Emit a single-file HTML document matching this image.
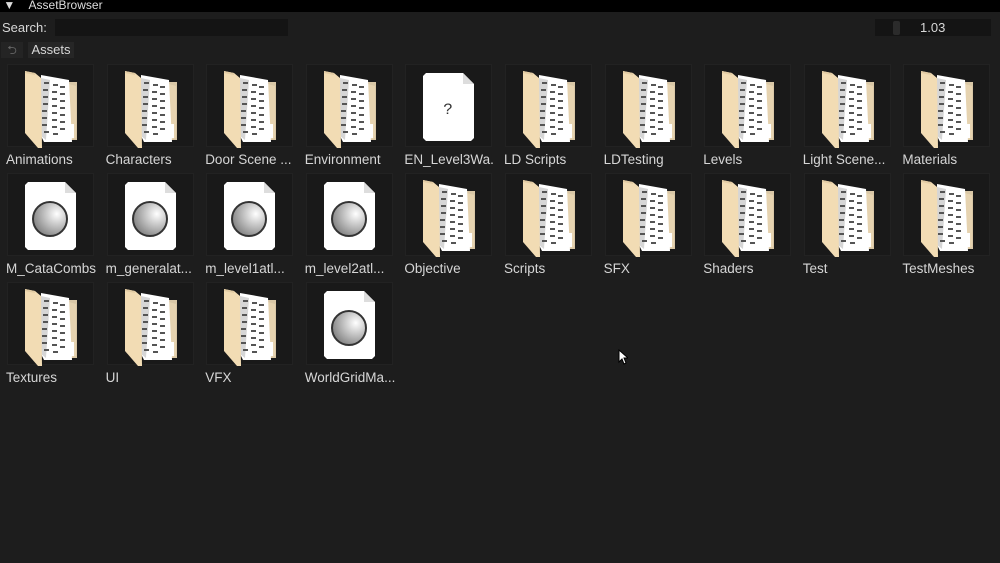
<!DOCTYPE html>
<html><head><meta charset="utf-8"><style>
body{margin:0;width:1000px;height:563px;background:#1d1d1d;font-family:"Liberation Sans",sans-serif;overflow:hidden;position:relative;color:#d8d8d8}
.title{position:absolute;left:0;top:0;width:1000px;height:12px;background:#000;font-size:12px;line-height:11px;color:#ddd}
.tile{position:absolute;width:87px;height:83px;background:#191919;border:1px solid #222;box-sizing:border-box}
.lbl{position:absolute;font-size:13.5px;color:#d6d6d6;white-space:nowrap}
.ic{position:absolute}
</style></head><body>
<svg width="0" height="0" style="position:absolute">
<defs>
<g id="fold">
<polygon points="45,12 53,12 53,70 45,70" fill="#d9c7a6"/>
<polygon points="45,14 52,16 52,68 45,70" fill="#e6d3b0"/>
<polygon points="17,5 45,10 48,72 20,72 17,66" fill="#fff"/>
<polygon points="17,8 26,10 22,70 17,66" fill="#d6d6d6"/>
<g fill="#555">
<rect x="20" y="12" width="5" height="2"/><rect x="29" y="14" width="5" height="2"/><rect x="36" y="16" width="5" height="2"/>
<rect x="19" y="19" width="5" height="2"/><rect x="28" y="21" width="5" height="2"/><rect x="36" y="23" width="5" height="2"/>
<rect x="19" y="26" width="5" height="2"/><rect x="28" y="28" width="5" height="2"/><rect x="36" y="30" width="5" height="2"/>
<rect x="19" y="33" width="5" height="2"/><rect x="28" y="35" width="5" height="2"/><rect x="36" y="37" width="5" height="2"/>
<rect x="18" y="40" width="5" height="2"/><rect x="28" y="42" width="5" height="2"/><rect x="36" y="44" width="5" height="2"/>
<rect x="18" y="47" width="5" height="2"/><rect x="28" y="49" width="5" height="2"/><rect x="36" y="51" width="5" height="2"/>
<rect x="18" y="54" width="5" height="2"/><rect x="28" y="56" width="5" height="2"/><rect x="36" y="58" width="5" height="2"/>
<rect x="20" y="61" width="5" height="2"/><rect x="29" y="63" width="5" height="2"/>
</g>
<rect x="47" y="54" width="3" height="14" fill="#fff"/>
<polygon points="1,1 11,3 17,8 18,78 14,78 1,63" fill="#f2dcb4"/>
<polygon points="1,1 11,3 11,5 1,3" fill="#e2cba3"/>
</g>
<g id="file">
<polygon points="1,4 4,1 41,1 52,12 52,66 49,69 4,69 1,66" fill="#fff"/>
<polygon points="41,1 41,12 52,12" fill="#ddd"/>
</g>
<radialGradient id="sg" cx="0.7" cy="0.35" r="0.8"><stop offset="0" stop-color="#fff"/><stop offset="0.5" stop-color="#bbb"/><stop offset="1" stop-color="#777"/></radialGradient>
</defs></svg>
<div class="title">&nbsp;▼&nbsp;&nbsp;&nbsp;&nbsp;AssetBrowser</div>
<div style="position:absolute;left:2px;top:20px;font-size:13px">Search:</div>
<div style="position:absolute;left:55px;top:19px;width:233px;height:17px;background:#141414"></div>
<div style="position:absolute;left:875px;top:19px;width:116px;height:17px;background:#141414"></div>
<div style="position:absolute;left:893px;top:21px;width:7px;height:14px;background:#2b2b2b;border-radius:2px"></div>
<div style="position:absolute;left:920px;top:20px;font-size:13px">1.03</div>
<div style="position:absolute;left:1px;top:42px;width:22px;height:16px;background:#242424;color:#666;font-size:12px;text-align:center;line-height:16px">⮌</div>
<div style="position:absolute;left:28px;top:42px;width:46px;height:16px;background:#262626;font-size:13px;line-height:16px;text-align:center">Assets</div>
<div id="g"></div>
<script>
var items=[["Animations",0],["Characters",0],["Door Scene ...",0],["Environment",0],["EN_Level3Wa.",2],["LD Scripts",0],["LDTesting",0],["Levels",0],["Light Scene...",0],["Materials",0],
["M_CataCombs",1],["m_generalat...",1],["m_level1atl...",1],["m_level2atl...",1],["Objective",0],["Scripts",0],["SFX",0],["Shaders",0],["Test",0],["TestMeshes",0],
["Textures",0],["UI",0],["VFX",0],["WorldGridMa...",1]];
var h="";
items.forEach(function(it,i){var c=i%10,r=Math.floor(i/10);var x=7+c*99.6,y=64+r*109;
h+='<div class="tile" style="left:'+x+'px;top:'+y+'px"></div>';
var s;
if(it[1]==0)s='<svg class="ic" style="left:'+(x+17)+'px;top:'+(y+6)+'px" width="54" height="80" viewBox="0 0 54 80"><use href="#fold"/></svg>';
else{s='<svg class="ic" style="left:'+(x+17)+'px;top:'+(y+8)+'px" width="54" height="72" viewBox="0 0 54 72"><use href="#file"/>';
if(it[1]==1)s+='<circle cx="26" cy="38" r="17" fill="url(#sg)" stroke="#333" stroke-width="2"/>';
else s+='<text x="26" y="42" font-size="16" text-anchor="middle" fill="#333" font-family="Liberation Mono">?</text>';
s+='</svg>';}
h+=s+'<div class="lbl" style="left:'+(x-1)+'px;top:'+(y+88)+'px">'+it[0]+'</div>';});
document.getElementById("g").innerHTML=h;
</script>
<svg style="position:absolute;left:618px;top:349px" width="10" height="16"><polygon points="1,1 1,13 4,10 6,15 8,14 6,9 10,9" fill="#fff" stroke="#000" stroke-width="1"/></svg>
</body></html>
